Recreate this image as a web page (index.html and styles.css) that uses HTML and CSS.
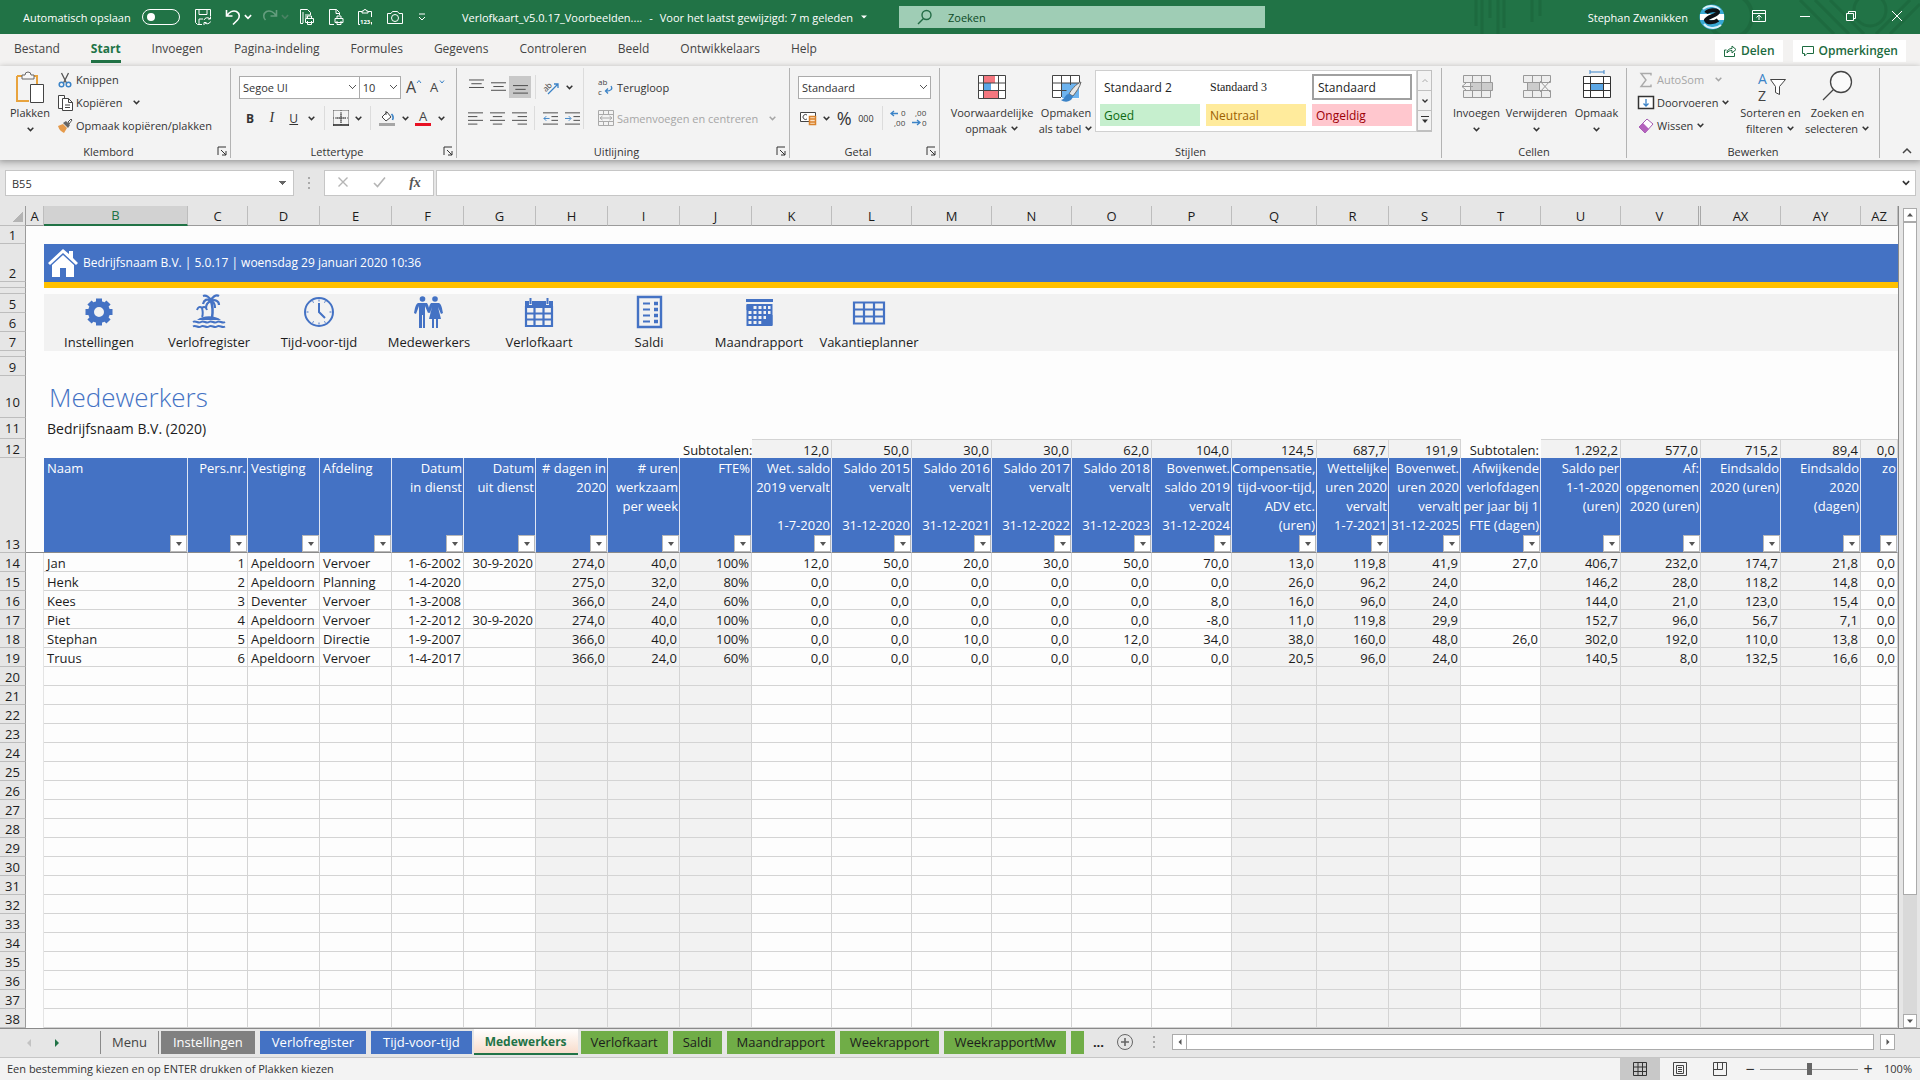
FILE: index.html
```html
<!DOCTYPE html>
<html lang="nl">
<head>
    <meta charset="UTF-8">
    <meta name="viewport" content="width=device-width, initial-scale=1.0">
    <title>Verlofkaart_v5.0.17_Voorbeelden</title>
    <link rel="stylesheet" href="styles.css">
</head>
<body>
    <svg class="defs" width="0" height="0">
        <symbol id="chev" viewBox="0 0 8 8"><path d="M1.5 2.5L4 5l2.500-2.500" fill="none" stroke="currentColor" stroke-width="1.300"/></symbol>
        <symbol id="launch" viewBox="0 0 10 10"><path d="M1 9V1h8M4 4l5 5M9 5v4H5" fill="none" stroke="currentColor"/></symbol>
    </svg>

    <header class="titlebar">
        <svg class="circuit" viewBox="0 0 450 34" preserveAspectRatio="none">
            <path d="M6 0v26M12 0v34M20 0v18M28 0v34M34 0v28M62 0v22M70 0v16M330 0l34 34M345 0l34 34M360 0l34 34M440 0l-34 34M450 4l-30 30" stroke="#1b6339" stroke-width="3" fill="none"/>
            <circle cx="260" cy="16" r="22" fill="none" stroke="#1b6339" stroke-width="4"/>
            <circle cx="400" cy="10" r="16" fill="none" stroke="#1b6339" stroke-width="3"/>
        </svg>
        <div class="quick">
            <label for="autosave">Automatisch opslaan</label>
            <input type="checkbox" id="autosave" class="switch">
            <button class="q save" aria-label="Opslaan"><svg width="18" height="18" viewBox="0 0 18 18"><path d="M8 16.500H3.500L1.500 14.500v-13h15V8M5 1.500v5h8v-5M5 16v-5h4M10 12a3.500 3.500 0 0 1 6-1M16.500 8.500V11H14M16.500 13.500a3.500 3.500 0 0 1-6 1M10 17v-2.500h2.500"/></svg></button>
            <button class="q undo" aria-label="Ongedaan maken"><svg width="16" height="18" viewBox="0 0 16 18"><path d="M1.500 2v6h6M2 7.500C4 4 8 2 11.500 3.500c3.500 2 3.500 6 1 8.500L8 16.500" stroke-width="1.600"/></svg></button>
            <button class="q dd" aria-label="Lijst"><svg width="10" height="10"><use href="#chev"/></svg></button>
            <button class="q redo" disabled aria-label="Opnieuw"><svg width="16" height="18" viewBox="0 0 16 18"><path d="M14.500 2v6h-6M14 7.500C12 4 8 2 4.500 3.500 1 5.500 1 9.500 3.500 12" stroke-width="1.600"/></svg></button>
            <button class="q dd" disabled aria-label="Lijst"><svg width="10" height="10"><use href="#chev"/></svg></button>
            <button class="q tool-q" aria-label="Afdrukvoorbeeld"><svg width="16" height="18" viewBox="0 0 16 18"><path d="M4 15.500H1.500v-14h7l3 3V7M4 4v11M6 7h5M6 9h3M6.500 10.500h8v4h-8zM8.500 10V8h4v2M8.500 13v3.500h4V13"/></svg></button>
            <button class="q tool-q" aria-label="Snel afdrukken"><svg width="16" height="18" viewBox="0 0 16 18"><path d="M6 16.500H1.500v-15h7l3 3V7M8 1.500v4h3.500M7 10.500h8v4H7zM9 10V8h4v2M9 13v3.500h4V13"/></svg></button>
            <button class="q tool-q" aria-label="Waarden plakken"><svg width="16" height="18" viewBox="0 0 16 18"><path d="M3 16.500H1.500v-13H5M11 3.500h3.500V9M5 5V3h1.500a1.500 1.500 0 0 1 3 0H11v2zM14.500 14v2.500"/><text x="3" y="16" class="tiny">123</text></svg></button>
            <button class="q tool-q" aria-label="Camera"><svg width="18" height="16" viewBox="0 0 18 16"><path d="M1.500 4.500H5l1.500-2h5l1.500 2h3.500v10h-15z"/><circle cx="9" cy="9" r="3.500"/></svg></button>
            <button class="q more" aria-label="Meer"><svg width="10" height="10" viewBox="0 0 10 10"><path d="M2 2h6M2 5l3 3 3-3"/></svg></button>
        </div>
        <div class="doc">
            <span>Verlofkaart_v5.0.17_Voorbeelden....</span><span>-</span><span>Voor het laatst gewijzigd: 7 m geleden</span>
            <svg width="8" height="8" viewBox="0 0 8 8"><path d="M1 2.500h6L4 5.500z" fill="#fff"/></svg>
        </div>
        <div class="search">
            <svg width="16" height="16" viewBox="0 0 16 16"><circle cx="9.500" cy="6" r="4.500"/><path d="M6.500 9.500L1 15"/></svg>
            <input type="text" placeholder="Zoeken" aria-label="Zoeken">
        </div>
        <div class="account">
            <span>Stephan Zwanikken</span>
            <svg class="avatar" width="26" height="26" viewBox="0 0 26 26"><circle cx="13" cy="13" r="12.500" fill="#38a9d4"/><path d="M1 10h24v6H1z" fill="#fff"/><path d="M4 5c6-5 14-3 17 1M22 21c-6 5-14 3-17-1" stroke="#d9f2fb" stroke-width="2" fill="none"/><path d="M7 9c2-3 11-4 12-1 0 3-11 5-12 8 1 3 8 3 12 0" stroke="#0d1317" stroke-width="4" fill="none"/></svg>
        </div>
        <div class="window-btns">
            <button aria-label="Lint"><svg width="14" height="12" viewBox="0 0 14 12"><path d="M.5.5h13v11H.5zM.5 3.500h13M7 10V5M4.500 7.500L7 5l2.500 2.500"/></svg></button>
            <button aria-label="Minimaliseren"><svg width="12" height="12" viewBox="0 0 12 12"><path d="M1 6.500h10"/></svg></button>
            <button aria-label="Herstellen"><svg width="12" height="12" viewBox="0 0 12 12"><path d="M1.500 3.500h7v7h-7zM3.500 3V1.500h7v7H9"/></svg></button>
            <button aria-label="Sluiten"><svg width="12" height="12" viewBox="0 0 12 12"><path d="M1 1l10 10M11 1L1 11"/></svg></button>
        </div>
    </header>

    <nav class="tabs">
        <a href="#">Bestand</a>
        <a href="#" class="active">Start</a>
        <a href="#">Invoegen</a>
        <a href="#">Pagina-indeling</a>
        <a href="#">Formules</a>
        <a href="#">Gegevens</a>
        <a href="#">Controleren</a>
        <a href="#">Beeld</a>
        <a href="#">Ontwikkelaars</a>
        <a href="#">Help</a>
        <div class="share">
            <button><svg width="14" height="14" viewBox="0 0 14 14"><path d="M3.500 6H1.500v6.500h10V9M4 9c0-3 2-4.500 5-4.500V2l4 3.500L9 9V6.500c-2 0-4 .5-5 2.500z"/></svg>Delen</button>
            <button><svg width="14" height="14" viewBox="0 0 14 14"><path d="M1.500 2.500h11v7H6L3.500 12V9.500h-2z"/></svg>Opmerkingen</button>
        </div>
    </nav>

    <section class="ribbon">
        <div class="group g-clip">
            <div class="body">
                <button class="big">
                    <svg width="32" height="34" viewBox="0 0 32 34"><path d="M3 6h6M19 6h4v8M3 6v25h12" stroke="#e8a33d" stroke-width="2" fill="none"/><path d="M8 9V5h3a3 3 0 0 1 6 0h3v4z" fill="#f8f8f8" stroke="#666"/><path d="M16.500 14.500h13v18h-13z" fill="#fff" stroke="#444"/></svg>
                    <span>Plakken</span><svg class="c"><use href="#chev"/></svg>
                </button>
                <div class="stack">
                    <button><svg width="16" height="16" viewBox="0 0 16 16" fill="none"><path d="M4.500 1l5 10M11.500 1l-5 10" stroke="#555" stroke-width="1.300"/><circle cx="4.500" cy="12.500" r="2.300" stroke="#3b83c7" stroke-width="1.500"/><circle cx="11.500" cy="12.500" r="2.300" stroke="#3b83c7" stroke-width="1.500"/></svg>Knippen</button>
                    <button><svg width="16" height="16" viewBox="0 0 16 16" fill="#fff" stroke="#444"><path d="M1.500.5h6v13h-6z"/><path d="M5.500 3.500h6l4 4v8h-10zM11.500 3.500v4h4M8 10h5M8 12.500h5"/></svg>Kopiëren<svg class="c far"><use href="#chev"/></svg></button>
                    <button><svg width="16" height="16" viewBox="0 0 16 16"><path d="M1 8l5-2 4 4-3 5c-2-1-5-3-6-7z" fill="#e59a4b"/><path d="M6 5l3-2 4 4-2 3z" fill="#666"/><path d="M11 4l3-3 1 1-3 4z" fill="#fff" stroke="#555"/></svg>Opmaak kopiëren/plakken</button>
                </div>
            </div>
            <div class="foot"><span>Klembord</span><button aria-label="Klembord opties"><svg><use href="#launch"/></svg></button></div>
        </div>

        <div class="group g-font">
            <div class="body rows">
                <div class="row">
                    <select class="sel face" aria-label="Lettertype"><option>Segoe UI</option></select>
                    <select class="sel size" aria-label="Grootte"><option>10</option></select>
                    <button class="t wide" aria-label="Groter"><svg width="18" height="18" viewBox="0 0 18 18"><text x="1" y="15" class="glyph-l">A</text><path d="M12 5l2-2.500L16 5" fill="none" stroke="#3b83c7"/></svg></button>
                    <button class="t" aria-label="Kleiner"><svg width="18" height="18" viewBox="0 0 18 18"><text x="2" y="14" class="glyph-m">A</text><path d="M12 2.500L14 5l2-2.500" fill="none" stroke="#3b83c7"/></svg></button>
                </div>
                <div class="row">
                    <button class="t bold">B</button><button class="t ital">I</button><button class="t under">U</button>
                    <button class="t d" aria-label="Lijst"><svg><use href="#chev"/></svg></button><i class="sep"></i>
                    <button class="t" aria-label="Randen"><svg width="16" height="16" viewBox="0 0 16 16" fill="none" stroke="#555"><path d="M.5.5h15M.5.5v15M15.500.5v15M8 0v15M0 8h16" stroke-dasharray="1 1"/><path d="M0 15h16" stroke="#222" stroke-width="1.500"/><path d="M3 8h10M8 3v10"/></svg></button>
                    <button class="t d" aria-label="Lijst"><svg><use href="#chev"/></svg></button><i class="sep"></i>
                    <button class="t" aria-label="Opvulkleur"><svg width="16" height="16" viewBox="0 0 16 16"><path d="M3 7l5-5 4 5-5 4zM7 5V1" fill="#fff" stroke="#444"/><path d="M12.500 4c2 2 2 4 1 6" stroke="#3b83c7" stroke-width="1.600" fill="none"/><path d="M0 13h16v3H0z" fill="#a6a6a6"/></svg></button>
                    <button class="t d" aria-label="Lijst"><svg><use href="#chev"/></svg></button>
                    <button class="t" aria-label="Tekstkleur"><svg width="16" height="16" viewBox="0 0 16 16"><text x="4" y="11" class="glyph-m">A</text><path d="M0 13h16v3H0z" fill="#e81123"/></svg></button>
                    <button class="t d" aria-label="Lijst"><svg><use href="#chev"/></svg></button>
                </div>
            </div>
            <div class="foot"><span>Lettertype</span><button aria-label="Lettertype opties"><svg><use href="#launch"/></svg></button></div>
        </div>

        <div class="group g-align">
            <div class="body">
                <div class="rows">
                    <div class="row">
                        <button class="t" aria-label="Boven"><svg class="ln" viewBox="0 0 16 16"><path d="M0 .5h16M2.500 4.500h11M0 8.500h16"/></svg></button>
                        <button class="t" aria-label="Midden"><svg class="ln" viewBox="0 0 16 16"><path d="M0 3.500h16M2.500 7.500h11M0 11.500h16"/></svg></button>
                        <button class="t on" aria-label="Onder"><svg class="ln" viewBox="0 0 16 16"><path d="M0 6.500h16M2.500 10.500h11M0 14.500h16"/></svg></button><i class="sep"></i>
                        <button class="t" aria-label="Afdrukstand"><svg width="18" height="18" viewBox="0 0 18 18"><text x="0" y="11" class="glyph-s" transform="rotate(-45 6 8)">ab</text><path d="M6 16L16 6M12 6h4v4" stroke="#3b83c7" stroke-width="1.300" fill="none"/></svg></button>
                        <button class="t d" aria-label="Lijst"><svg><use href="#chev"/></svg></button>
                    </div>
                    <div class="row">
                        <button class="t" aria-label="Links"><svg class="ln" viewBox="0 0 16 16"><path d="M0 2.500h16M0 6.500h10M0 10.500h16M0 14.500h10"/></svg></button>
                        <button class="t" aria-label="Centreren"><svg class="ln" viewBox="0 0 16 16"><path d="M0 2.500h16M3 6.500h10M0 10.500h16M3 14.500h10"/></svg></button>
                        <button class="t" aria-label="Rechts"><svg class="ln" viewBox="0 0 16 16"><path d="M0 2.500h16M6 6.500h10M0 10.500h16M6 14.500h10"/></svg></button><i class="sep"></i>
                        <button class="t" aria-label="Inspringing verkleinen"><svg class="ln" viewBox="0 0 16 16"><path d="M0 2.500h16M9 6.500h7M9 10.500h7M0 14.500h16"/><path d="M7 8.500H1M3.500 6L1 8.500 3.500 11" stroke="#3b83c7"/></svg></button>
                        <button class="t" aria-label="Inspringing vergroten"><svg class="ln" viewBox="0 0 16 16"><path d="M0 2.500h16M9 6.500h7M9 10.500h7M0 14.500h16"/><path d="M0 8.500h6M4 6l2.500 2.500L4 11" stroke="#3b83c7"/></svg></button>
                    </div>
                </div>
                <div class="rows wrap">
                    <button class="row"><svg width="16" height="18" viewBox="0 0 16 18"><text x="0" y="7" class="glyph-s">ab</text><text x="0" y="17" class="glyph-s">c</text><path d="M13 8c2 3 0 5-5 5M10 10.500L7.500 13l2.500 2.500" stroke="#3b83c7" stroke-width="1.300" fill="none"/></svg>Terugloop</button>
                    <button class="row" disabled><svg width="16" height="16" viewBox="0 0 16 16" fill="none" stroke="#aaa"><path d="M.5.5h15v15H.5zM.5 4.500h15M.5 11.500h15M5.500.5v4M10.500.5v4M5.500 11.500v4M10.500 11.500v4M2 8h12M4.500 6L2 8l2.500 2M11.500 6L14 8l-2.500 2"/></svg>Samenvoegen en centreren<svg class="c far"><use href="#chev"/></svg></button>
                </div>
            </div>
            <div class="foot"><span>Uitlijning</span><button aria-label="Uitlijning opties"><svg><use href="#launch"/></svg></button></div>
        </div>

        <div class="group g-num">
            <div class="body rows">
                <div class="row"><select class="sel format" aria-label="Getalnotatie"><option>Standaard</option></select></div>
                <div class="row">
                    <button class="t" aria-label="Valuta"><svg width="18" height="16" viewBox="0 0 18 16"><path d="M.5 2.500h15v9H.5z" fill="#fff" stroke="#444"/><path d="M7 5a2.500 2.500 0 1 0 0 4" fill="none" stroke="#444"/><path d="M9.500 6.500h6v8h-6zM9.500 9h6M9.500 12h6" fill="#fbe3cb" stroke="#d9822b" stroke-width="1.500"/></svg></button>
                    <button class="t d" aria-label="Lijst"><svg><use href="#chev"/></svg></button>
                    <button class="t pct">%</button><button class="t zeros">000</button><i class="sep"></i>
                    <button class="t" aria-label="Meer decimalen"><svg width="18" height="18" viewBox="0 0 18 18"><text x="11" y="7" class="glyph-s">0</text><text x="4" y="17" class="glyph-s">,00</text><path d="M8 4.500H1M4 2L1 4.500 4 7" stroke="#3b83c7" stroke-width="1.300" fill="none"/></svg></button>
                    <button class="t" aria-label="Minder decimalen"><svg width="18" height="18" viewBox="0 0 18 18"><text x="4" y="7" class="glyph-s">,00</text><text x="11" y="17" class="glyph-s">0</text><path d="M1 13.500h8M6 11l3 2.500L6 16" stroke="#3b83c7" stroke-width="1.300" fill="none"/></svg></button>
                </div>
            </div>
            <div class="foot"><span>Getal</span><button aria-label="Getal opties"><svg><use href="#launch"/></svg></button></div>
        </div>

        <div class="group g-style">
            <div class="body">
                <button class="big">
                    <svg width="30" height="34" viewBox="0 0 30 34"><path d="M1.500 5.500h27v23h-27z" fill="#fff"/><path d="M7 5h11v8H7zM7 20h14v8H7z" fill="#f4777f"/><path d="M7 13h7v7H7z" fill="#5ba7e6"/><path d="M1.500 5.500h27v23h-27zM1.500 13h27M1.500 20.500h27M6.500 5v23M21.500 5v23" fill="none" stroke="#444"/></svg>
                    <span>Voorwaardelijke</span><span>opmaak<svg class="c"><use href="#chev"/></svg></span>
                </button>
                <button class="big">
                    <svg width="30" height="34" viewBox="0 0 30 34"><path d="M1.500 5.500h27v23h-27z" fill="#fff"/><path d="M11 13h17v15H11z" fill="#6db3ee"/><path d="M28.500 12V5.500h-27v22H10M1.500 13h27M1.500 20.500h14M10.500 5v22M19.500 5v10" fill="none" stroke="#444"/><path d="M30 12c-5 2-10 8-12 12l4 2c3-4 7-9 8-14z" fill="#e8e8e8" stroke="#666"/><path d="M18 24c-4 0-4 5-8 6 4 3 11 2 12-4z" fill="#3b83c7"/></svg>
                    <span>Opmaken</span><span>als tabel<svg class="c"><use href="#chev"/></svg></span>
                </button>
                <div class="gallery">
                    <button>Standaard 2</button><button class="st3">Standaard 3</button><button class="cur">Standaard</button>
                    <button class="good">Goed</button><button class="neutral">Neutraal</button><button class="bad">Ongeldig</button>
                </div>
                <div class="gscroll">
                    <button aria-label="Omhoog" disabled><svg width="8" height="8" viewBox="0 0 8 8"><path d="M1.500 5L4 2.500 6.500 5" fill="none" stroke="#aaa"/></svg></button>
                    <button aria-label="Omlaag"><svg width="8" height="8"><use href="#chev"/></svg></button>
                    <button aria-label="Meer"><svg width="8" height="10" viewBox="0 0 8 10"><path d="M0 1.500h8" stroke="#333"/><path d="M1 4.500h6L4 8z" fill="#333"/></svg></button>
                </div>
            </div>
            <div class="foot"><span>Stijlen</span></div>
        </div>

        <div class="group g-cells">
            <div class="body">
                <button class="big">
                    <svg width="32" height="34" viewBox="0 0 32 34" fill="#eee" stroke="#999"><path d="M2.500 5.500h27v7h-27zM2.500 20.500h27v7h-27zM11.500 5v7M20.500 5v7M11.500 20v7M20.500 20v7"/><path d="M9.500 12.500h22v8h-22z" fill="#ccc"/><path d="M20.500 12v8M12 16.500H1M5 13l-4 3.500L5 20" fill="none"/></svg>
                    <span>Invoegen</span><svg class="c"><use href="#chev"/></svg>
                </button>
                <button class="big">
                    <svg width="32" height="34" viewBox="0 0 32 34" fill="#eee" stroke="#999"><path d="M2.500 5.500h27v7h-27zM2.500 20.500h27v7h-27zM11.500 5v7M20.500 5v7M11.500 20v7M20.500 20v7"/><path d="M6.500 12.500h12v8h-12z" fill="#ccc"/><path d="M19 11l10 11M29 11L19 22" fill="none"/></svg>
                    <span>Verwijderen</span><svg class="c"><use href="#chev"/></svg>
                </button>
                <button class="big">
                    <svg width="32" height="34" viewBox="0 0 32 34"><path d="M2.500 6.500h27v21h-27z" fill="#fff"/><path d="M10 13h13v8H10z" fill="#5ba7e6"/><path d="M2.500 6.500h27v21h-27zM2 13.500h27M2 20.500h27M9.500 6v22M22.500 6v22" fill="none" stroke="#333"/><path d="M9 2h14M9 0v4M23 0v4" stroke="#3b83c7" fill="none"/></svg>
                    <span>Opmaak</span><svg class="c"><use href="#chev"/></svg>
                </button>
            </div>
            <div class="foot"><span>Cellen</span></div>
        </div>

        <div class="group g-edit">
            <div class="body">
                <div class="stack tight">
                    <button disabled><svg width="16" height="16" viewBox="0 0 16 16"><path d="M13 3.500V1.500H3L8 8l-5 6.500h10v-2" fill="none" stroke="#aaa" stroke-width="1.400"/></svg>AutoSom<svg class="c far"><use href="#chev"/></svg></button>
                    <button><svg width="16" height="16" viewBox="0 0 16 16"><path d="M.5 1.500h15v12H.5z" fill="#fff" stroke="#333" stroke-width="1.500"/><path d="M8 4v7M5.500 8.500L8 11l2.500-2.500" fill="none" stroke="#3b83c7" stroke-width="1.300"/></svg>Doorvoeren<svg class="c"><use href="#chev"/></svg></button>
                    <button><svg width="16" height="16" viewBox="0 0 16 16"><path d="M1 9l8-8 6 5-8 9z" fill="#fff" stroke="#a35bb0"/><path d="M1 9l4-4 6 6-4 4z" fill="#b463bd"/></svg>Wissen<svg class="c"><use href="#chev"/></svg></button>
                </div>
                <button class="big">
                    <svg width="32" height="34" viewBox="0 0 32 34"><text x="3" y="14" class="glyph-az">A</text><text x="3" y="31" class="glyph-z">Z</text><path d="M15.500 9.500h15l-6 7v8l-4-2v-6z" fill="#fff" stroke="#444"/></svg>
                    <span>Sorteren en</span><span>filteren<svg class="c"><use href="#chev"/></svg></span>
                </button>
                <button class="big">
                    <svg width="32" height="34" viewBox="0 0 32 34" fill="none" stroke="#444" stroke-width="1.300"><circle cx="19" cy="12" r="10.500" fill="#fafafa"/><path d="M11.500 19.500L1 30"/></svg>
                    <span>Zoeken en</span><span>selecteren<svg class="c"><use href="#chev"/></svg></span>
                </button>
            </div>
            <div class="foot"><span>Bewerken</span></div>
        </div>
        <button class="collapse" aria-label="Lint samenvouwen"><svg width="10" height="8" viewBox="0 0 10 8"><path d="M1 6l4-4 4 4" fill="none" stroke="#444" stroke-width="1.500"/></svg></button>
    </section>

    <section class="formula">
        <select class="namebox" aria-label="Naamvak"><option>B55</option></select>
        <svg class="dots" width="4" height="14" viewBox="0 0 4 14"><path d="M1 1h2v2H1zM1 6h2v2H1zM1 11h2v2H1z" fill="#aaa"/></svg>
        <div class="fx">
            <button aria-label="Annuleren"><svg width="12" height="12" viewBox="0 0 12 12"><path d="M1.500 1.500l9 9M10.500 1.500l-9 9" stroke="#b5b5b5" stroke-width="1.400"/></svg></button>
            <button aria-label="Invoeren"><svg width="13" height="12" viewBox="0 0 13 12"><path d="M1 7l3.500 3.500L12 1.500" fill="none" stroke="#b5b5b5" stroke-width="1.600"/></svg></button>
            <button class="fn">fx</button>
        </div>
        <div class="fbar"><input type="text" aria-label="Formulebalk"><svg width="10" height="10"><use href="#chev"/></svg></div>
    </section>

    <main class="sheet">
        <div class="grid">
            <table id="cells">
                <colgroup id="cols"></colgroup>
                <tbody>
                    <tr class="letters" id="letters"><th class="corner"></th></tr>
                    <tr class="r18"><th>1</th><td colspan="25"></td></tr>
                    <tr class="r38"><th>2</th><td></td><td colspan="24" class="banner">
                        <div><svg width="32" height="30" viewBox="0 0 32 30"><path d="M16 1L1 15l2 2L16 5l13 12 2-2-5-5V3h-4v3z" fill="#fff"/><path d="M16 7L5 17v12h8v-9h6v9h8V17z" fill="#fff"/></svg><span>Bedrijfsnaam B.V. | 5.0.17 | woensdag 29 januari 2020 10:36</span></div>
                    </td></tr>
                    <tr class="r6"><th></th><td></td><td colspan="24" class="gold"></td></tr>
                    <tr class="r6"><th></th><td colspan="25"></td></tr>
                    <tr><th>5</th><td rowspan="3"></td><td colspan="24" rowspan="3" class="menu">
                        <nav>
                            <a href="#"><svg width="32" height="34" viewBox="0 0 32 34" fill="none" stroke="#4472c4"><circle cx="16" cy="18" r="8" stroke-width="6"/><path d="M16 4.500v5M16 26.500v5M2.500 18h5M24.500 18h5M6.500 8.500l4 4M21.500 23.500l4 4M25.500 8.500l-4 4M10.500 23.500l-4 4" stroke-width="6"/></svg>Instellingen</a>
                            <a href="#"><svg width="32" height="34" viewBox="0 0 32 34" fill="none" stroke="#4472c4"><path d="M18 7c2 6 2 11 1 17" stroke-width="2.500"/><path d="M18 7c-4-3-7-1-8 3M18 7c-1-4-5-6-8-5M18 7c1-4 5-7 8-5M18 7c4-2 8 0 8 4M18 7c3 1 4 4 4 7M18 7c-3 1-5 4-5 7" stroke-width="2.200"/><path d="M9 14c1 4 1 7 0 9M9 14c-2-2-4-1-5 2M9 14c2-2 4-1 5 2" stroke-width="2"/><path d="M4 26c6-5 18-5 24 0z" fill="#4472c4" stroke="none"/><path d="M0 28c3-2 5 2 8 0s5 2 8 0 5 2 8 0 5 2 8 0M0 32.500c3-2 5 2 8 0s5 2 8 0 5 2 8 0 5 2 8 0" stroke-width="2"/></svg>Verlofregister</a>
                            <a href="#"><svg width="32" height="34" viewBox="0 0 32 34" fill="none" stroke="#4472c4"><circle cx="16" cy="18" r="14" stroke-width="2"/><path d="M16 9v9l6 6" stroke-width="2"/><path d="M16 5.500v2M16 28.500v2M3.500 18h2M26.500 18h2M9.700 7.200l.8 1.500M22.300 7.200l-.8 1.500M9.700 28.800l.8-1.500M22.300 28.800l-.8-1.500"/></svg>Tijd-voor-tijd</a>
                            <a href="#"><svg width="32" height="34" viewBox="0 0 32 34" fill="#4472c4"><circle cx="9.500" cy="5" r="2.800"/><circle cx="22" cy="5" r="2.800"/><path d="M5 9h9c2 3 2 6 3 9l-2 1-3-7v22h-2V21H9v13H6V12l-3 8-2-1c1-4 1-8 4-10z"/><path d="M18 9h8c3 2 3 6 4 10l-2 1-3-7 3 12h-3v9h-2v-9h-2v9h-2v-9h-3l3-12-2 6-2-1c1-4 1-7 3-9z"/></svg>Medewerkers</a>
                            <a href="#"><svg width="32" height="34" viewBox="0 0 32 34" fill="none" stroke="#4472c4"><path d="M3 13v19h26V13zM3 19.500h26M3 25.500h26M11.500 13v18M20.500 13v18" stroke-width="2.200"/><path d="M2 7h4v4h3V7h14v4h3V7h4v7H2z" fill="#4472c4" stroke="none"/><path d="M7.500 4v6M24.500 4v6" stroke-width="2"/></svg>Verlofkaart</a>
                            <a href="#"><svg width="32" height="34" viewBox="0 0 32 34" fill="none" stroke="#4472c4"><path d="M5 3h23v30H5z" stroke-width="2.400"/><path d="M10 9.500h7M10 15.500h7M10 21.500h7M10 27.500h7" stroke-width="1.800"/><path d="M21 9.500h4M21 15.500h4M21 21.500h4M21 27.500h4" stroke-width="3.500"/></svg>Saldi</a>
                            <a href="#"><svg width="32" height="34" viewBox="0 0 32 34" fill="none" stroke="#4472c4"><path d="M3 6.500h27" stroke-width="3"/><path d="M4.500 11h24v20h-24zM4.500 16h24M4.500 21h24M4.500 26h24M9.500 11v20M14.500 11v20M19.500 11v20M24 11v20" stroke-width="2"/><path d="M4 11h5v5H4zM19 26h10v5H19zM24 21h5v5h-5z" fill="#4472c4"/></svg>Maandrapport</a>
                            <a href="#"><svg width="34" height="34" viewBox="0 0 34 34" fill="none" stroke="#4472c4" stroke-width="2.200"><path d="M2 8.500h30v21H2zM2 15.500h30M2 22.500h30M12 8.500v21M22 8.500v21"/></svg>Vakantieplanner</a>
                        </nav>
                    </td></tr>
                    <tr><th>6</th></tr>
                    <tr><th>7</th></tr>
                    <tr class="r6"><th></th><td colspan="25"></td></tr>
                    <tr><th>9</th><td colspan="25"></td></tr>
                    <tr class="r42"><th>10</th><td></td><td colspan="24"><h1>Medewerkers</h1></td></tr>
                    <tr class="r21"><th>11</th><td></td><td colspan="24">Bedrijfsnaam B.V. (2020)</td></tr>
                    <tr class="totals" id="totals"><th>12</th><td></td></tr>
                    <tr class="heads" id="heads"><th>13</th><td></td></tr>
                </tbody>
                <tbody id="rows"></tbody>
            </table>
        </div>
        <div class="vscroll">
            <button aria-label="Omhoog"><svg width="8" height="8" viewBox="0 0 8 8"><path d="M1 5.500h6L4 2z" fill="#555"/></svg></button>
            <div class="vtrack"><div class="vthumb"></div></div>
            <button aria-label="Omlaag"><svg width="8" height="8" viewBox="0 0 8 8"><path d="M1 2.500h6L4 6z" fill="#555"/></svg></button>
        </div>
    </main>

    <nav class="sheets">
        <div class="arrows">
            <button aria-label="Vorige" disabled><svg width="8" height="8" viewBox="0 0 8 8"><path d="M6 0v8L2 4z" fill="#c3c3c3"/></svg></button>
            <button aria-label="Volgende"><svg width="8" height="8" viewBox="0 0 8 8"><path d="M2 0v8l4-4z" fill="#217346"/></svg></button>
        </div>
        <a href="#" class="plain">Menu</a>
        <a href="#" class="gray">Instellingen</a>
        <a href="#" class="blue">Verlofregister</a>
        <a href="#" class="blue">Tijd-voor-tijd</a>
        <a href="#" class="current">Medewerkers</a>
        <a href="#" class="green">Verlofkaart</a>
        <a href="#" class="green">Saldi</a>
        <a href="#" class="green">Maandrapport</a>
        <a href="#" class="green">Weekrapport</a>
        <a href="#" class="green">WeekrapportMw</a>
        <a href="#" class="green cut" aria-label="Volgend blad"></a>
        <button class="ell">...</button>
        <button class="add" aria-label="Nieuw blad"><svg width="18" height="18" viewBox="0 0 18 18" fill="none" stroke="#666"><circle cx="9" cy="9" r="7.500"/><path d="M5 9h8M9 5v8" stroke-width="1.600"/></svg></button>
        <svg class="dots" width="4" height="14" viewBox="0 0 4 14"><path d="M1 1h2v2H1zM1 6h2v2H1zM1 11h2v2H1z" fill="#aaa"/></svg>
        <div class="hscroll">
            <button aria-label="Links"><svg width="8" height="8" viewBox="0 0 8 8"><path d="M5.500 1v6L2.500 4z" fill="#555"/></svg></button>
            <div class="hthumb"></div>
            <button aria-label="Rechts"><svg width="8" height="8" viewBox="0 0 8 8"><path d="M2.500 1v6l3-3z" fill="#555"/></svg></button>
        </div>
    </nav>

    <footer class="status">
        <span class="msg">Een bestemming kiezen en op ENTER drukken of Plakken kiezen</span>
        <button class="on" aria-label="Normaal"><svg width="14" height="14" viewBox="0 0 14 14" fill="none" stroke="#333"><path d="M.5.5h13v13H.5zM.5 5h13M.5 9.500h13M5 .5v13M9.500.5v13"/></svg></button>
        <button aria-label="Pagina-indeling"><svg width="14" height="14" viewBox="0 0 14 14" fill="none" stroke="#444"><path d="M.5.5h13v13H.5zM3.500 3.500h7v8h-7zM5 5.500h4M5 7.500h4M5 9.500h4"/></svg></button>
        <button aria-label="Pagina-eindevoorbeeld"><svg width="14" height="14" viewBox="0 0 14 14" fill="none" stroke="#444"><path d="M.5.5h13v13H.5zM4.500.5v7M.5 7.500h9v-7"/></svg></button>
        <button class="pm">−</button>
        <input type="range" min="0" max="200" value="100" aria-label="Zoomen">
        <button class="pm">+</button>
        <span class="zoom">100%</span>
    </footer>

    <script>
        // width of each column; the last one takes what is left
        const columns = [
            ['A', 18], ['B', 144], ['C', 60], ['D', 72], ['E', 72], ['F', 72], ['G', 72], ['H', 72],
            ['I', 72], ['J', 72], ['K', 80], ['L', 80], ['M', 80], ['N', 80], ['O', 80], ['P', 80],
            ['Q', 85], ['R', 72], ['S', 72], ['T', 80], ['U', 80], ['V', 80], ['AX', 80], ['AY', 80], ['AZ', 0]
        ];
        const shaded = ['H', 'I', 'J', 'Q', 'R', 'S', 'U', 'V', 'AX', 'AY'];
        const leftAligned = ['B', 'D', 'E'];

        const headings = [
            'Naam', 'Pers.nr.', 'Vestiging', 'Afdeling', 'Datum|in dienst', 'Datum|uit dienst',
            '# dagen in|2020', '# uren|werkzaam|per week', 'FTE%', 'Wet. saldo|2019 vervalt||1-7-2020',
            'Saldo 2015|vervalt||31-12-2020', 'Saldo 2016|vervalt||31-12-2021', 'Saldo 2017|vervalt||31-12-2022',
            'Saldo 2018|vervalt||31-12-2023', 'Bovenwet.|saldo 2019|vervalt|31-12-2024',
            'Compensatie,|tijd-voor-tijd,|ADV etc.|(uren)', 'Wettelijke|uren 2020|vervalt|1-7-2021',
            'Bovenwet.|uren 2020|vervalt|31-12-2025', 'Afwijkende|verlofdagen|per jaar bij 1|FTE (dagen)',
            'Saldo per|1-1-2020|(uren)', 'Af:|opgenomen|2020 (uren)', 'Eindsaldo|2020 (uren)',
            'Eindsaldo|2020|(dagen)', 'zo'
        ];

        const totals = ['', '', '', '', '', '', '', '', 'Subtotalen:', '12,0', '50,0', '30,0', '30,0', '62,0',
            '104,0', '124,5', '687,7', '191,9', 'Subtotalen:', '1.292,2', '577,0', '715,2', '89,4', '0,0'];

        const people = [
            ['Jan', '1', 'Apeldoorn', 'Vervoer', '1-6-2002', '30-9-2020', '274,0', '40,0', '100%', '12,0', '50,0', '20,0', '30,0', '50,0', '70,0', '13,0', '119,8', '41,9', '27,0', '406,7', '232,0', '174,7', '21,8', '0,0'],
            ['Henk', '2', 'Apeldoorn', 'Planning', '1-4-2020', '', '275,0', '32,0', '80%', '0,0', '0,0', '0,0', '0,0', '0,0', '0,0', '26,0', '96,2', '24,0', '', '146,2', '28,0', '118,2', '14,8', '0,0'],
            ['Kees', '3', 'Deventer', 'Vervoer', '1-3-2008', '', '366,0', '24,0', '60%', '0,0', '0,0', '0,0', '0,0', '0,0', '8,0', '16,0', '96,0', '24,0', '', '144,0', '21,0', '123,0', '15,4', '0,0'],
            ['Piet', '4', 'Apeldoorn', 'Vervoer', '1-2-2012', '30-9-2020', '274,0', '40,0', '100%', '0,0', '0,0', '0,0', '0,0', '0,0', '-8,0', '11,0', '119,8', '29,9', '', '152,7', '96,0', '56,7', '7,1', '0,0'],
            ['Stephan', '5', 'Apeldoorn', 'Directie', '1-9-2007', '', '366,0', '40,0', '100%', '0,0', '0,0', '10,0', '0,0', '12,0', '34,0', '38,0', '160,0', '48,0', '26,0', '302,0', '192,0', '110,0', '13,8', '0,0'],
            ['Truus', '6', 'Apeldoorn', 'Vervoer', '1-4-2017', '', '366,0', '24,0', '60%', '0,0', '0,0', '0,0', '0,0', '0,0', '0,0', '20,5', '96,0', '24,0', '', '140,5', '8,0', '132,5', '16,6', '0,0']
        ];

        const cols = document.getElementById('cols');
        const letters = document.getElementById('letters');
        cols.innerHTML = '<col style="width:26px">';
        columns.forEach(([name, width]) => {
            cols.innerHTML += width ? `<col style="width:${width}px">` : '<col>';
            const cls = name === 'B' ? 'picked' : name === 'V' ? 'hidden-next' : '';
            letters.innerHTML += `<th class="${cls}">${name}</th>`;
        });

        const letterAt = (i) => columns[i + 1][0];
        const align = (i) => leftAligned.includes(letterAt(i)) ? 'left' : 'right';

        totals.forEach((text, i) => {
            const filled = text && text !== 'Subtotalen:';
            document.getElementById('totals').innerHTML += `<td class="right ${filled ? 'shade line' : ''}">${text}</td>`;
        });

        headings.forEach((text, i) => {
            document.getElementById('heads').innerHTML +=
                `<th class="head ${align(i)}">${text.split('|').join('<br>')}<button class="filter" aria-label="Filter"></button></th>`;
        });

        for (let r = 14; r <= 38; r++) {
            const person = people[r - 14] || [];
            let html = `<th>${r}</th><td class="edge"></td>`;
            headings.forEach((_, i) => {
                const shade = shaded.includes(letterAt(i)) ? 'shade' : '';
                html += `<td class="line ${align(i)} ${shade}">${person[i] || ''}</td>`;
            });
            document.getElementById('rows').innerHTML += `<tr>${html}</tr>`;
        }
    </script>
</body>
</html>
```
FILE: styles.css
```css
* {
    box-sizing: border-box;
}

body {
    margin: 0;
    min-height: 100vh;
    display: flex;
    flex-direction: column;
    background: #e6e6e6;
    color: #333;
    font-family: "Open Sans", "Noto Sans", sans-serif;
    font-size: 11px;
}

button, input, select {
    font: inherit;
    color: inherit;
    background: none;
    border: none;
    padding: 0;
    margin: 0;
    border-radius: 0;
    white-space: nowrap;
}

input:focus, select:focus {
    outline: none;
}

a {
    color: inherit;
    text-decoration: none;
}

svg {
    flex: none;
    overflow: visible;
}

.defs {
    position: absolute;
}

/* title bar */
.titlebar {
    position: relative;
    display: flex;
    align-items: center;
    height: 34px;
    background: #217346;
    color: #fff;
}

.titlebar > * {
    position: relative;
}

.titlebar .circuit {
    position: absolute;
    right: 0;
    top: 0;
    width: 450px;
    height: 34px;
    overflow: hidden;
    opacity: 0.5;
}

.titlebar button svg path, .titlebar button svg circle {
    fill: none;
    stroke: #fff;
}

.quick {
    display: flex;
    align-items: center;
    width: 462px;
    padding-left: 23px;
}

.quick label {
    width: 119px;
}

.switch {
    appearance: none;
    width: 38px;
    height: 16px;
    border: 1px solid #fff;
    border-radius: 8px;
    display: flex;
    align-items: center;
    padding-left: 4px;
    margin-right: 14px;
}

.switch::before {
    content: "";
    width: 8px;
    height: 8px;
    border-radius: 4px;
    background: #fff;
}

.q {
    display: flex;
    align-items: center;
    justify-content: center;
    margin-right: 13px;
}

.q.undo, .q.redo {
    margin-right: 2px;
}

.q.dd {
    margin-right: 9px;
}

.q:disabled {
    opacity: 0.3;
}

.tiny {
    font-size: 6px;
    font-weight: 700;
    fill: #fff;
}

.doc {
    display: flex;
    align-items: center;
    gap: 7px;
    width: 437px;
    white-space: nowrap;
}

.search {
    display: flex;
    align-items: center;
    gap: 15px;
    width: 366px;
    height: 22px;
    padding-left: 18px;
    background: #9fcdb5;
    color: #0b4a26;
}

.search svg {
    fill: none;
    stroke: #226b45;
    stroke-width: 1.4;
}

.search input {
    flex: 1;
}

.search input::placeholder {
    color: #0b4a26;
    opacity: 1;
}

.account {
    display: flex;
    align-items: center;
    gap: 11px;
    margin-left: auto;
    margin-right: 11px;
}

.window-btns {
    display: flex;
}

.window-btns button {
    width: 46px;
    height: 28px;
}

/* ribbon tabs */
.tabs {
    display: flex;
    align-items: center;
    gap: 31px;
    height: 32px;
    padding: 1px 14px 0 14px;
    background: #f3f2f1;
    font-size: 12px;
    color: #444;
}

.tabs a {
    line-height: 22px;
    border-bottom: 3px solid transparent;
}

.tabs a.active {
    font-weight: 700;
    color: #217346;
    border-color: #217346;
}

.share {
    display: flex;
    gap: 10px;
    margin-left: auto;
}

.share button {
    display: flex;
    align-items: center;
    gap: 4px;
    height: 22px;
    padding: 0 8px;
    background: #fff;
    color: #1c6b40;
    font-weight: 600;
}

.share svg {
    fill: none;
    stroke: #1c6b40;
}

/* ribbon */
.ribbon {
    display: flex;
    height: 94px;
    padding: 2px 0;
    background: #f3f3f3;
    box-shadow: 0 1px 6px rgba(0, 0, 0, 0.3);
    position: relative;
}

.group {
    display: flex;
    flex-direction: column;
    flex: none;
    border-right: 1px solid #b3b3b3;
}

.g-clip { width: 231px; }
.g-font { width: 226px; }
.g-align { width: 333px; }
.g-num { width: 150px; }
.g-style { width: 502px; }
.g-cells { width: 185px; }
.g-edit { width: 253px; }

.body {
    display: flex;
    align-items: flex-start;
    height: 76px;
    padding: 0 8px;
}

.foot {
    display: flex;
    align-items: center;
    height: 14px;
}

.foot span {
    flex: 1;
    text-align: center;
}

.foot button {
    display: flex;
    width: 13px;
}

.foot svg {
    width: 10px;
    height: 10px;
}

.big {
    display: flex;
    flex-direction: column;
    align-items: center;
    padding-top: 2px;
    line-height: 16px;
}

.big > svg:first-child {
    margin-bottom: 1px;
}

.c {
    width: 9px;
    height: 9px;
    margin-left: 3px;
}

.big > .c {
    margin: 4px 0 0;
}

.c.far {
    margin-left: 10px;
}

.g-clip .big {
    width: 44px;
}

.stack {
    display: flex;
    flex-direction: column;
    margin-left: 5px;
}

.stack button {
    display: flex;
    align-items: center;
    height: 23px;
}

.stack button svg:first-child {
    margin-right: 3px;
}

button:disabled {
    color: #a6a6a6;
}

.rows {
    display: flex;
    flex-direction: column;
    gap: 9px;
    padding-top: 8px;
}

.body.rows {
    align-items: stretch;
}

.row {
    display: flex;
    align-items: center;
    height: 22px;
}

.body .rows.wrap {
    margin-left: 14px;
}

.g-align .rows:first-child .row {
    width: 118px;
}

.g-align .rows:first-child {
    border-right: 1px solid #dcdcdc;
}

.wrap .row svg:first-child {
    margin-right: 3px;
}

.sel {
    appearance: none;
    height: 23px;
    padding: 0 6px 0 3px;
    border: 1px solid #ababab;
    background-color: #fff;
    background-image: linear-gradient(45deg, transparent 40%, #555 40% 60%, transparent 60%), linear-gradient(-45deg, transparent 40%, #555 40% 60%, transparent 60%);
    background-repeat: no-repeat;
    background-size: 4px 4px;
    background-position: right 6px center, right 3px center;
}

.sel.face { width: 123px; }
.sel.size { width: 43px; margin-left: -1px; }
.sel.format { width: 134px; }

.t {
    display: flex;
    align-items: center;
    justify-content: center;
    width: 22px;
    height: 22px;
}

.t.d {
    width: 14px;
}

.t.d svg {
    width: 9px;
    height: 9px;
}

.t.wide {
    width: 26px;
}

.t.on {
    background: #c8c8c8;
}

.t.bold {
    font-size: 12px;
    font-weight: 700;
}

.t.ital {
    font: italic 14px "Liberation Serif", serif;
}

.t.under {
    font-size: 12px;
    text-decoration: underline;
}

.t.pct {
    font-size: 18px;
}

.t.zeros {
    font-size: 9px;
}

.sep {
    width: 1px;
    height: 24px;
    margin: 0 5px;
    background: #dcdcdc;
}

.g-align .sep {
    margin: 0 4px;
}

.ln {
    width: 15px;
    height: 16px;
    fill: none;
    stroke: #444;
}

.glyph-l { font-size: 16px; fill: #444; }
.glyph-m { font-size: 13px; fill: #444; }
.glyph-s { font-size: 8px; fill: #444; }
.glyph-z { font-size: 14px; fill: #444; }
.glyph-az { font-size: 14px; fill: #3b83c7; }

.g-style .big:first-child {
    width: 88px;
}

.g-style .big:nth-child(2) {
    width: 60px;
}

.gallery {
    display: grid;
    grid-template-columns: repeat(3, 100px);
    grid-template-rows: 26px 22px;
    gap: 4px 6px;
    height: 62px;
    margin-top: 2px;
    margin-left: -1px;
    padding: 3px 4px;
    background: #fff;
    border: 1px solid #d0d0d0;
    font-size: 12px;
}

.gallery button {
    text-align: left;
    padding-left: 4px;
    color: #222;
}

.gallery .st3 {
    font: 12px "Liberation Serif", serif;
}

.gallery .cur {
    border: 2px solid #a0a0a0;
}

.gallery .good { background: #c6efce; color: #0d6a12; }
.gallery .neutral { background: #ffeb9c; color: #9c5f00; }
.gallery .bad { background: #ffc7ce; color: #9c0006; }

.gscroll {
    display: flex;
    flex-direction: column;
    width: 15px;
    height: 62px;
    margin-top: 2px;
    border: 1px solid #c0c0c0;
}

.gscroll button {
    flex: 1;
    border-bottom: 1px solid #c0c0c0;
}

.g-cells .body {
    padding: 0 0 0 6px;
}

.g-cells .big {
    width: 57px;
}

.g-cells .big:nth-child(2) {
    width: 63px;
}

.g-edit .body {
    padding: 0 0 0 11px;
}

.g-edit .stack {
    width: 99px;
    margin: 0;
}

.g-edit .big {
    width: 67px;
}

.collapse {
    margin: auto 8px 0 auto;
    height: 16px;
}

/* formula bar */
.formula {
    display: flex;
    align-items: center;
    height: 46px;
    padding: 0 4px 0 5px;
    background: linear-gradient(#d2d2d2, #e6e6e6 10px);
}

.namebox {
    appearance: none;
    width: 289px;
    height: 26px;
    padding: 0 6px;
    border: 1px solid #c6c6c6;
    background-color: #fff;
    background-image: conic-gradient(from 315deg at 50% 100%, #666 90deg, transparent 0);
    background-size: 7px 4px;
    background-repeat: no-repeat;
    background-position: right 7px center;
}

.dots {
    margin: 0 13px;
}

.fx {
    display: flex;
    width: 110px;
    height: 26px;
    margin-right: 2px;
    background: #fff;
    border: 1px solid #c6c6c6;
}

.fx button {
    flex: 1;
}

.fx .fn {
    font: italic 700 14px "Liberation Serif", serif;
    color: #555;
}

.fbar {
    display: flex;
    align-items: center;
    flex: 1;
    height: 26px;
    padding-right: 4px;
    background: #fff;
    border: 1px solid #c6c6c6;
}

.fbar input {
    flex: 1;
}

/* sheet */
.sheet {
    display: flex;
    flex: 1;
}

.grid {
    flex: 1;
    min-width: 0;
    background: #fdfdfd;
    border-right: 1px solid #8a8a8a;
}

table {
    width: 100%;
    table-layout: fixed;
    border-collapse: separate;
    border-spacing: 0;
    font-size: 13px;
    line-height: 16px;
    color: #1c1c1c;
}

tr {
    height: 19px;
}

td, th {
    padding: 0 2px 0 3px;
    white-space: nowrap;
    text-align: left;
    font-weight: 400;
    vertical-align: bottom;
}

tr > th:first-child {
    padding: 0;
    text-align: center;
    background: #e6e6e6;
    border-right: 1px solid #9b9b9b;
    border-bottom: 1px solid #bdbdbd;
}

.r18 { height: 18px; }
.r38 { height: 38px; }
.r6 { height: 6px; line-height: 0; }
.r42 { height: 42px; }
.r21 { height: 21px; }

.r42 > th:first-child {
    padding-bottom: 7px;
}

.r21 > * {
    vertical-align: middle;
}

.r21 td {
    font-size: 14px;
}

.letters {
    height: 20px;
}

.letters th {
    padding: 0;
    text-align: center;
    vertical-align: middle;
    background: #e6e6e6;
    border-right: 1px solid #bdbdbd;
    border-bottom: 1px solid #9b9b9b;
}

.letters .corner {
    background: linear-gradient(135deg, transparent 50%, #b4b4b4 50%) no-repeat 12px 5px / 11px 11px #e6e6e6;
}

.letters .picked {
    background: #d2d2d2;
    color: #217346;
    border-bottom: 2px solid #217346;
}

.letters .hidden-next {
    border-right: 3px double #a8a8a8;
}

.banner {
    background: #4472c4;
    color: #fff;
    vertical-align: middle;
    font-size: 12px;
}

.banner div {
    display: flex;
    align-items: center;
    gap: 4px;
}

.gold {
    background: #ffc000;
}

.menu {
    padding: 0;
    background: #f2f2f2;
    vertical-align: top;
}

.menu nav {
    display: flex;
}

.menu a {
    display: flex;
    flex-direction: column;
    align-items: center;
    width: 110px;
    gap: 6px;
}

h1 {
    margin: 0;
    padding: 0 0 2px 2px;
    font-size: 26px;
    font-weight: 300;
    line-height: 38px;
    color: #4472c4;
}

.right {
    text-align: right;
}

.left {
    text-align: left;
}

.line {
    border-right: 1px solid #d4d4d4;
    border-bottom: 1px solid #d4d4d4;
}

.edge {
    border-right: 1px solid #e4e4e4;
}

.shade {
    background: #f2f2f2;
}

.totals .line {
    border-top: 1px solid #d4d4d4;
    border-bottom: none;
}

.heads {
    height: 95px;
}

.heads > * {
    border-bottom: 1px solid #8a8a8a;
}

.head {
    position: relative;
    height: 95px;
    padding: 1px 1px 0 0;
    vertical-align: top;
    line-height: 19px;
    background: #4472c4;
    color: #fff;
    border-right: 1px solid #dfe6f4;
}

.head.left {
    padding-left: 3px;
}

.head.right {
    text-align: right;
}

.filter {
    position: absolute;
    right: 0;
    bottom: 0;
    width: 17px;
    height: 17px;
    background: #fff;
    border: 1px solid #b8b8b8;
}

.filter::after {
    content: "";
    display: block;
    margin: 1px auto 0;
    width: 0;
    border: 3px solid transparent;
    border-top: 4px solid #555;
    border-bottom: none;
}

.vscroll {
    display: flex;
    flex-direction: column;
    width: 21px;
    padding: 2px 3px 0 4px;
}

.vscroll button {
    height: 14px;
    background: #fff;
    border: 1px solid #ababab;
    line-height: 0;
}

.vtrack {
    flex: 1;
    background: #d9d9d9;
}

.vthumb {
    height: 85%;
    background: #fff;
    border: 1px solid #ababab;
}

/* sheet tabs */
.sheets {
    display: flex;
    align-items: center;
    height: 30px;
    padding: 0 25px 2px 0;
    border-top: 1px solid #8a8a8a;
    border-bottom: 1px solid #c6c6c6;
    font-size: 13px;
    color: #1c1c1c;
}

.arrows {
    display: flex;
    gap: 20px;
    width: 100px;
    padding-left: 25px;
}

.sheets a {
    height: 23px;
    line-height: 22px;
    padding: 0 10px;
    margin-right: 5px;
    white-space: nowrap;
}

.sheets .plain {
    padding: 0 11px;
    border-left: 1px solid #8a8a8a;
    border-right: 1px solid #8a8a8a;
    margin-right: 2px;
    color: #444;
}

.sheets .gray { background: #808080; color: #fff; padding: 0 12px; }
.sheets .blue { background: #4472c4; color: #fff; padding: 0 12px; }
.sheets .green { background: #70ad47; }

.sheets .current {
    align-self: flex-start;
    height: 26px;
    line-height: 26px;
    padding: 0 11px;
    margin-left: -3px;
    margin-right: 3px;
    background: linear-gradient(#fff, #f8dccb);
    border-bottom: 2px solid #217346;
    font-size: 12px;
    font-weight: 700;
    color: #217346;
}

.sheets .cut {
    width: 13px;
    padding: 0;
}

.ell {
    margin: 0 12px 0 4px;
    font-weight: 700;
}

.add {
    display: flex;
}

.sheets .dots {
    margin: 0 16px 0 18px;
}

.hscroll {
    display: flex;
    flex: 1;
    height: 16px;
}

.hscroll button {
    width: 15px;
    background: #fff;
    border: 1px solid #ababab;
    line-height: 0;
}

.hthumb {
    flex: 1;
    margin-right: 6px;
    background: #fff;
    border: 1px solid #ababab;
    border-left: none;
}

/* status bar */
.status {
    display: flex;
    align-items: center;
    height: 22px;
    padding: 0 8px 0 7px;
    background: #f3f3f3;
}

.msg, .zoom {
    padding-bottom: 2px;
}

.msg {
    flex: 1;
}

.status button {
    width: 40px;
    height: 22px;
    line-height: 0;
}

.status .on {
    background: #c8c8c8;
}

.status .pm {
    width: 20px;
    font-size: 16px;
}

.status input {
    appearance: none;
    width: 98px;
    height: 12px;
    background: linear-gradient(#9a9a9a, #9a9a9a) no-repeat center / 100% 1px;
}

.status input::-webkit-slider-thumb {
    appearance: none;
    width: 5px;
    height: 12px;
    background: #666;
}

.zoom {
    width: 34px;
    text-align: right;
}
```
